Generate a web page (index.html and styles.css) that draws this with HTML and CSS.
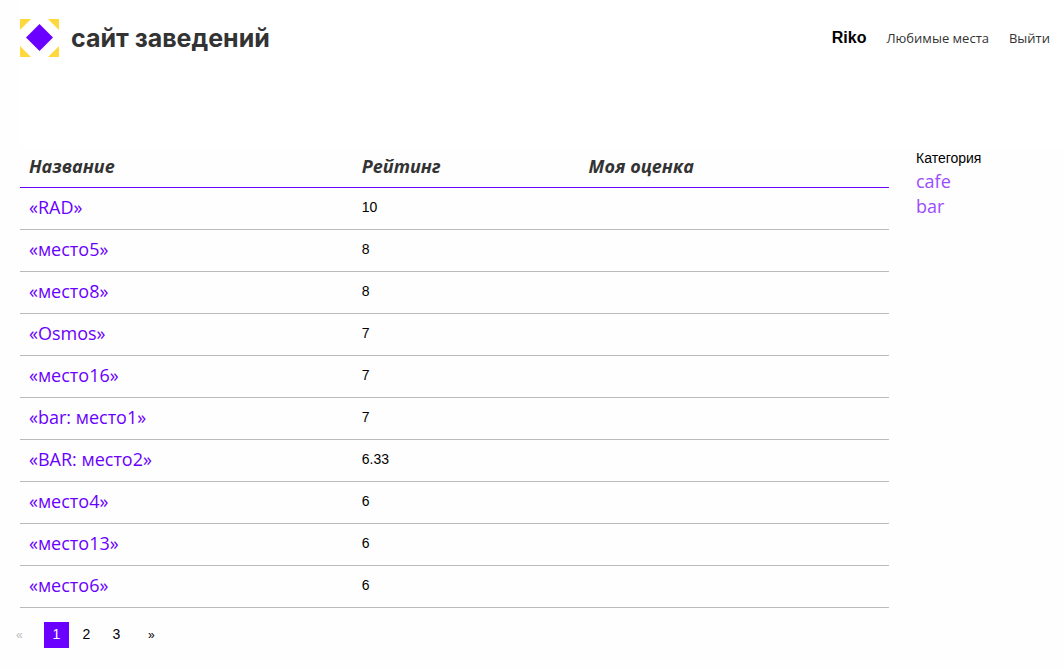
FILE: index.html
```html
<!DOCTYPE html>
<html lang="ru">
<head>
<meta charset="utf-8">
<title>сайт заведений</title>
<link rel="stylesheet" href="styles.css">
</head>
<body>
<header class="header">
  <a class="logo" href="#">
    <svg class="logo-mark" viewBox="0 0 39 38" aria-hidden="true">
      <path fill="#ffd83d" d="M0 0H11L0 11ZM28 0H39V11ZM0 27L11 38H0ZM39 27V38H28Z"/>
      <path fill="#6a00ff" d="M19.5 5L33 18.5L19.5 32L6 18.5Z"/>
    </svg>
    <span class="logo-text">сайт заведений</span>
  </a>
  <nav class="nav">
    <strong class="user">Riko</strong>
    <a class="nav-link" href="#">Любимые места</a>
    <a class="nav-link" href="#">Выйти</a>
  </nav>
</header>
<div class="layout">
  <main class="content">
    <table class="places">
      <thead>
        <tr><th class="col-name">Название</th><th class="col-rating">Рейтинг</th><th>Моя оценка</th></tr>
      </thead>
      <tbody>
        <tr><td><a href="#">«RAD»</a></td><td>10</td><td></td></tr>
        <tr><td><a href="#">«место5»</a></td><td>8</td><td></td></tr>
        <tr><td><a href="#">«место8»</a></td><td>8</td><td></td></tr>
        <tr><td><a href="#">«Osmos»</a></td><td>7</td><td></td></tr>
        <tr><td><a href="#">«место16»</a></td><td>7</td><td></td></tr>
        <tr><td><a href="#">«bar: место1»</a></td><td>7</td><td></td></tr>
        <tr><td><a href="#">«BAR: место2»</a></td><td>6.33</td><td></td></tr>
        <tr><td><a href="#">«место4»</a></td><td>6</td><td></td></tr>
        <tr><td><a href="#">«место13»</a></td><td>6</td><td></td></tr>
        <tr><td><a href="#">«место6»</a></td><td>6</td><td></td></tr>
      </tbody>
    </table>
    <nav class="pages" aria-label="Страницы">
      <span class="page-prev">«</span>
      <span class="page page-current" aria-current="page">1</span>
      <a class="page" href="#">2</a>
      <a class="page" href="#">3</a>
      <a class="page-next" href="#">»</a>
    </nav>
  </main>
  <aside class="sidebar">
    <div class="sidebar-title">Категория</div>
    <a class="category" href="#">cafe</a>
    <a class="category" href="#">bar</a>
  </aside>
</div>
</body>
</html>
```
FILE: styles.css
```css
* {
  box-sizing: border-box;
}

body {
  margin: 0;
  background: #fefefe;
  color: #000;
  font: 14px/20px "Liberation Sans", Arial, sans-serif;
}

a {
  color: inherit;
  text-decoration: none;
}

.header {
  display: flex;
  justify-content: space-between;
  align-items: flex-start;
  min-height: 148px;
  margin-left: 20px;
  padding: 19px 14px 0 0;
  background: #fff;
}

.logo {
  display: flex;
  align-items: center;
  gap: 12px;
}

.logo-mark {
  width: 39px;
  height: 38px;
}

.logo-text {
  color: #333;
  font: 700 25px/38px Inter, sans-serif;
}

.nav {
  display: flex;
  align-items: baseline;
  gap: 20px;
  padding-top: 9px;
}

.user {
  font-size: 16px;
}

.nav-link {
  color: #333;
  font: 13px/20px "Open Sans", sans-serif;
}

.layout {
  display: grid;
  grid-template-columns: minmax(0, 1fr) 148px;
  gap: 27px;
  padding-left: 20px;
}

.places {
  width: 100%;
  table-layout: fixed;
  border-collapse: separate;
  border-spacing: 0;
}

.places th,
.places td {
  padding: 0 9px 3px;
  text-align: left;
}

.places th {
  height: 40px;
  border-bottom: 1px solid #6a00ff;
  color: #333;
  font: italic 700 18px/24px "Open Sans", sans-serif;
}

.places td {
  height: 42px;
  border-bottom: 1px solid #bbb;
}

.places a {
  color: #6a00ff;
  font: 18px/24px "Open Sans", sans-serif;
}

.col-name {
  width: 38.3%;
}

.col-rating {
  width: 26.1%;
}

.pages {
  display: flex;
  align-items: center;
  gap: 5px;
  margin: 14px 0 20px -4px;
  line-height: 24px;
}

.page {
  width: 25px;
  padding-bottom: 2px;
  text-align: center;
}

.page-current {
  background: #6a00ff;
  color: #fff;
}

.page-prev {
  width: 23px;
  color: #bbb;
  font-size: 12px;
}

.page-next {
  padding-left: 14px;
  font-size: 12px;
}

.sidebar-title {
  line-height: 21px;
}

.category {
  display: block;
  color: #9b4dff;
  font: 18px/25px "Open Sans", sans-serif;
}
```
